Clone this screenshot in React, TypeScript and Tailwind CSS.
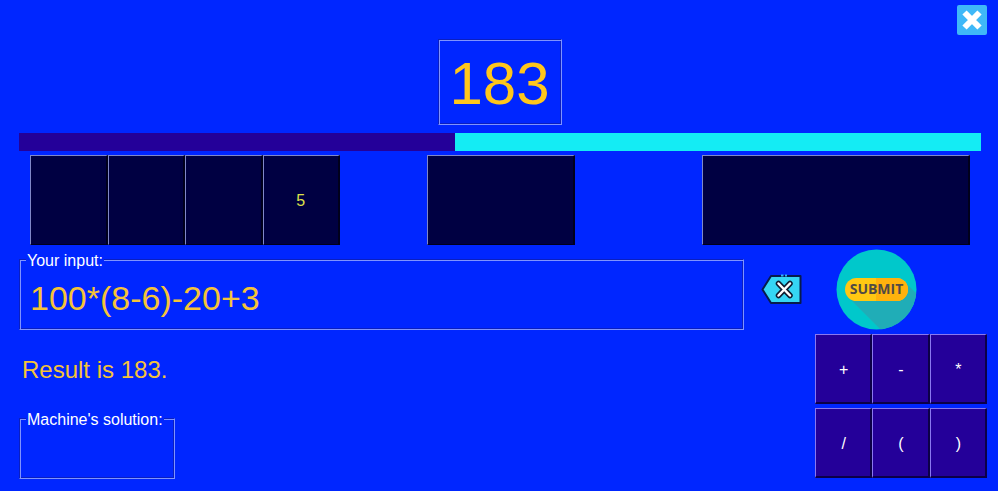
import { useState } from "react";
import type { ReactNode } from "react";

const NUMBERS = ["", "", "", "5"];
const OPERATORS = ["+", "-", "*", "/", "(", ")"];

const etched =
  "border border-t-[#0a1fc0] border-l-[#0a1fc0] border-r-[#7f93ff] border-b-[#7f93ff] shadow-[inset_1px_1px_0_#7f93ff,inset_-1px_-1px_0_#0a1fc0]";

const tile =
  "border border-r-2 border-t-[#8088c8] border-l-[#8088c8] border-r-[#00001c] border-b-[#00001c] bg-[#000042] pt-0.5 text-base text-[#dde04a]";

const key =
  "flex items-center justify-center border border-r-2 border-b-2 border-t-[#8a78f0] border-l-[#8a78f0] border-r-[#0c0048] border-b-[#0c0048] bg-[#240099] pt-0.5 pl-px text-base text-white";

function Group({ label, id, children, className }: { label: string; id: string; children: ReactNode; className: string }) {
  return (
    <fieldset className={className}>
      <legend className="relative z-10 ml-[7px] h-5 bg-[#0026ff] px-px text-base leading-5 text-white">
        <label htmlFor={id}>{label}</label>
      </legend>
      {children}
    </fieldset>
  );
}

function CloseIcon() {
  return (
    <svg viewBox="0 0 30 30" className="size-[30px]" aria-hidden="true">
      <rect width="30" height="30" rx="2" fill="#3fb8f8" />
      <path d="M7.500 7.500L22.500 22.500M22.500 7.500L7.500 22.500" stroke="#fff" strokeWidth="6" />
    </svg>
  );
}

function BackspaceIcon() {
  return (
    <svg viewBox="0 0 41 31" className="h-[31px] w-[41px]" aria-hidden="true">
      <path d="M10 2H39.500V29H10L1.500 15.500Z" fill="#35d6f4" stroke="#071b4c" strokeWidth="2" strokeLinejoin="round" />
      <path d="M20 1.500H22.500M24 1.500H26" stroke="#35b4f4" strokeWidth="2" />
      <path d="M17.500 9.500L29 21.500M29 9.500L17.500 21.500" stroke="#101c30" strokeWidth="5.500" strokeLinecap="round" />
      <path d="M17.500 9.500L29 21.500M29 9.500L17.500 21.500" stroke="#fff" strokeWidth="2.500" strokeLinecap="round" />
    </svg>
  );
}

function SubmitIcon() {
  return (
    <svg viewBox="0 0 81 81" className="size-[81px]" aria-hidden="true">
      <defs>
        <clipPath id="disc">
          <circle cx="40.500" cy="40.500" r="40" />
        </clipPath>
      </defs>
      <g clipPath="url(#disc)">
        <rect width="81" height="81" fill="#00c8cb" />
        <path d="M12 48L45 81H81V45L68 32Z" fill="#20adb7" />
      </g>
      <rect x="9" y="29" width="63" height="23" rx="11.500" fill="#ffc812" />
      <path d="M40 29H60.500A11.500 11.500 0 0 1 60.500 52H40Z" fill="#ffb20d" />
      <text x="40.500" y="45" textAnchor="middle" fontFamily="Open Sans, sans-serif" fontSize="14" fontWeight="700" fill="#504a45">
        SUBMIT
      </text>
    </svg>
  );
}

export default function App() {
  const [expression, setExpression] = useState("100*(8-6)-20+3");

  return (
    <main className="min-h-screen bg-[#0026ff] pb-3 font-['Liberation_Sans',Arial,sans-serif]">
      <header className="flex h-[39px] justify-end pt-[5px] pr-[11px]">
        <button type="button" aria-label="Close" className="size-[30px]">
          <CloseIcon />
        </button>
      </header>

      <div className="pr-[17px] pl-[18px]">
        <h1 className={`mx-auto flex h-[86px] w-[124px] items-center justify-center pt-1 text-[60px] leading-none text-[#ffc61c] ${etched}`}>
          183
        </h1>
        <div className="mt-2 ml-px flex h-[18px] bg-[#14ecf4]" role="progressbar" aria-label="Time" aria-valuenow={45}>
          <div className="w-[45.3%] bg-[#240099]" />
        </div>
      </div>

      <section className="mt-1 grid h-[90px] grid-cols-[310px_87fr_148px_127fr_268px] pr-7 pl-[30px]">
        <div className="grid grid-cols-4">
          {NUMBERS.map((n, i) => (
            <button key={i} type="button" aria-label={`Number ${i + 1}`} className={tile} onClick={() => setExpression(expression + n)}>
              {n}
            </button>
          ))}
        </div>
        <button type="button" aria-label="Medium number" className={`col-start-3 ${tile}`} />
        <button type="button" aria-label="Large number" className={`col-start-5 ${tile}`} />
      </section>

      <section className="mt-1 flex pr-[81px] pl-[19px]">
        <Group label="Your input:" id="expression" className="mt-0.5 min-w-0 flex-1">
          <input
            id="expression"
            value={expression}
            onChange={(e) => setExpression(e.target.value)}
            className={`-mt-3 block h-[71px] w-full bg-transparent pt-2 pl-[10px] text-[34px] text-[#f5c338] outline-none ${etched}`}
          />
        </Group>
        <button type="button" aria-label="Backspace" className="ml-[17px] self-center" onClick={() => setExpression(expression.slice(0, -1))}>
          <BackspaceIcon />
        </button>
        <button type="button" aria-label="Submit" className="ml-[34px]">
          <SubmitIcon />
        </button>
      </section>

      <section className="mt-1 flex items-start justify-between pr-[11px] pl-[19px]">
        <div>
          <p className="mt-5 ml-[3px] text-2xl leading-8 text-[#f5c338]">Result is 183.</p>
          <Group label="Machine's solution:" id="solution" className="mt-6 w-[156px]">
            <output id="solution" className={`-mt-3 block h-[61px] ${etched}`} />
          </Group>
        </div>
        <div className="grid w-[172px] grid-cols-3 gap-y-1">
          {OPERATORS.map((op) => (
            <button key={op} type="button" className={`h-[70px] ${key}`} onClick={() => setExpression(expression + op)}>
              {op}
            </button>
          ))}
        </div>
      </section>
    </main>
  );
}
